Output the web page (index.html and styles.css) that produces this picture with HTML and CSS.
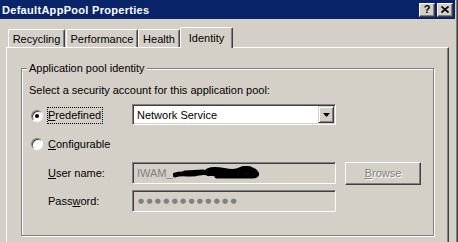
FILE: index.html
```html
<!DOCTYPE html>
<html lang="en">
<head>
    <meta charset="UTF-8">
    <meta name="viewport" content="width=device-width, initial-scale=1.0">
    <title>DefaultAppPool Properties</title>
    <link rel="stylesheet" href="styles.css">
</head>
<body>
    <div class="window">
        <div class="titlebar">
            <span class="title">DefaultAppPool Properties</span>
            <div class="caption-buttons">
                <span class="cap-btn cap-help">?</span>
                <span class="cap-btn">
                    <svg width="8" height="7" viewBox="0 0 8 7"><path d="M0.5 0.5 L7.5 6.5 M7.5 0.5 L0.5 6.5" stroke="#000" stroke-width="1.6"/></svg>
                </span>
            </div>
        </div>

        <div class="content">
            <div class="tabs">
                <div class="tab tab-recycling">Recycling</div>
                <div class="tab tab-performance">Performance</div>
                <div class="tab tab-health">Health</div>
                <div class="tab tab-identity active">Identity</div>
            </div>

            <div class="panel">
                <fieldset class="group">
                    <legend>Application pool identity</legend>
                    <p class="hint">Select a security account for this application pool:</p>

                    <div class="row row-predefined">
                        <span class="radio-cell"><span class="radio checked"></span></span>
                        <span class="label-cell"><span class="focus"><u>P</u>redefined</span></span>
                        <div class="combo">
                            <span class="combo-text">Network Service</span>
                            <span class="drop-btn">
                                <svg width="7" height="4" viewBox="0 0 7 4"><polygon points="0,0 7,0 3.5,4" fill="#000"/></svg>
                            </span>
                        </div>
                    </div>

                    <div class="row row-configurable">
                        <span class="radio-cell"><span class="radio"></span></span>
                        <span class="label-cell"><u>C</u>onfigurable</span>
                    </div>

                    <div class="row row-user">
                        <span class="radio-cell"></span>
                        <span class="label-cell"><u>U</u>ser name:</span>
                        <div class="field">
                            IWAM_<svg class="scribble" width="86" height="15" viewBox="0 0 86 15">
                                <path d="M2 9 C10 6 18 10 26 7 C34 5 40 9 46 8" stroke="#000" stroke-width="5" fill="none" stroke-linecap="round"/>
                                <path d="M36 6 C46 2 58 11 68 5 C74 2 80 5 82 8" stroke="#000" stroke-width="8" fill="none" stroke-linecap="round"/>
                                <path d="M44 10 L80 10 M12 7 L30 6" stroke="#000" stroke-width="5" stroke-linecap="round"/>
                            </svg>
                        </div>
                        <span class="browse"><u>B</u>rowse</span>
                    </div>

                    <div class="row row-password">
                        <span class="radio-cell"></span>
                        <span class="label-cell">Pass<u>w</u>ord:</span>
                        <div class="field"><span class="dots">●●●●●●●●●●●●</span></div>
                    </div>
                </fieldset>
            </div>
        </div>
    </div>
</body>
</html>
```

FILE: styles.css
```css
html {
    background: #404040;
}
body {
    margin: 0;
    width: 457px;
    height: 242px;
    overflow: hidden;
    background: #d4d0c8;
    font-family: "Liberation Sans", Arial, sans-serif;
    font-size: 11px;
    color: #000;
}
.window {
    width: 455px;
    height: 242px;
    padding-right: 1px;
    border-right: 1px solid #808080;
}
.titlebar {
    height: 19px;
    background: #0a246a;
    display: flex;
    align-items: center;
    justify-content: space-between;
    padding: 0 2px;
}
.title {
    color: #fff;
    font-weight: bold;
    letter-spacing: 0.3px;
}
.caption-buttons {
    display: flex;
    gap: 2px;
}
.cap-btn {
    width: 16px;
    height: 14px;
    box-sizing: border-box;
    background: #d4d0c8;
    border: 1px solid;
    border-color: #fff #404040 #404040 #fff;
    box-shadow: inset -1px -1px #808080;
    display: flex;
    align-items: center;
    justify-content: center;
}
.cap-help {
    font-weight: bold;
    font-size: 11px;
    line-height: 1;
}
.content {
    padding: 8px 0 0 6px;
}
.tabs {
    display: flex;
    align-items: flex-end;
    height: 20px;
    padding-left: 2px;
}
.tab {
    height: 18px;
    box-sizing: border-box;
    border-top: 1px solid #fff;
    border-left: 1px solid #fff;
    border-right: 1px solid #404040;
    border-top-left-radius: 2px;
    border-top-right-radius: 2px;
    box-shadow: inset -1px 0 #808080;
    display: flex;
    align-items: center;
    justify-content: center;
}
.tab-recycling {
    width: 57px;
    margin-right: 1px;
}
.tab-performance {
    width: 72px;
}
.tab-health {
    width: 42px;
}
.tab-identity {
    width: 53px;
}
.tab.active {
    height: 21px;
    margin-bottom: -1px;
    padding-bottom: 1px;
    background: #d4d0c8;
    position: relative;
    z-index: 1;
}
.panel {
    width: 443px;
    height: 195px;
    box-sizing: border-box;
    border-top: 1px solid #fff;
    border-left: 1px solid #fff;
    border-right: 1px solid #404040;
    box-shadow: inset -1px 0 #808080;
    padding: 13px 0 0 14px;
}
.group {
    width: 413px;
    box-sizing: border-box;
    margin: 0;
    padding: 8px 7px 23px 7px;
    border: 1px solid #808080;
    box-shadow: 1px 1px 0 #fff, inset 1px 1px 0 #fff;
}
.group legend {
    padding: 0 2px;
    margin-left: -2px;
    line-height: 14px;
    background: #d4d0c8;
}
.hint {
    margin: 0;
    line-height: 14px;
}
.row {
    display: flex;
    align-items: center;
}
.row-predefined {
    margin-top: 7px;
    height: 21px;
}
.row-configurable {
    margin-top: 9px;
    height: 20px;
}
.row-user {
    margin-top: 8px;
    height: 22px;
}
.row-password {
    margin-top: 6px;
    height: 22px;
}
.radio-cell {
    width: 19px;
    flex-shrink: 0;
}
.row-predefined .radio-cell,
.row-predefined .label-cell {
    padding-top: 2px;
}
.label-cell {
    width: 84px;
    flex-shrink: 0;
}
.radio {
    margin-left: 2px;
    width: 12px;
    height: 12px;
    box-sizing: border-box;
    border-radius: 50%;
    border: 1px solid;
    border-color: #808080 #fff #fff #808080;
    box-shadow: inset 1px 1px #404040;
    background: #fff;
    display: flex;
    align-items: center;
    justify-content: center;
}
.radio.checked::after {
    content: "";
    width: 4px;
    height: 4px;
    border-radius: 50%;
    background: #000;
}
.focus {
    display: inline-block;
    margin-left: -1px;
    padding: 0 1px 0 0;
    line-height: 15px;
    border: 1px dotted #000;
}
.combo {
    width: 204px;
    height: 21px;
    box-sizing: border-box;
    border: 1px solid;
    border-color: #808080 #fff #fff #808080;
    box-shadow: inset 1px 1px #404040, inset -1px -1px #d4d0c8;
    background: #fff;
    padding: 1px;
    display: flex;
    align-items: center;
}
.combo-text {
    flex: 1;
    padding-left: 3px;
}
.drop-btn {
    width: 16px;
    height: 17px;
    box-sizing: border-box;
    background: #d4d0c8;
    border: 1px solid;
    border-color: #d4d0c8 #404040 #404040 #d4d0c8;
    box-shadow: inset 1px 1px #fff, inset -1px -1px #808080;
    display: flex;
    align-items: center;
    justify-content: center;
}
.field {
    width: 204px;
    height: 22px;
    box-sizing: border-box;
    border: 1px solid;
    border-color: #808080 #fff #fff #808080;
    box-shadow: inset 1px 1px #404040, inset -1px -1px #d4d0c8;
    background: #d4d0c8;
    color: #808080;
    padding-left: 4px;
    display: flex;
    align-items: center;
}
.dots {
    font-family: "DejaVu Sans", sans-serif;
    font-size: 7px;
    letter-spacing: 2.3px;
    padding-left: 1px;
}
.browse {
    margin-left: 9px;
    width: 76px;
    height: 23px;
    box-sizing: border-box;
    border: 1px solid;
    border-color: #fff #404040 #404040 #fff;
    box-shadow: inset -1px -1px #808080;
    color: #808080;
    text-shadow: 1px 1px 0 #fff;
    display: flex;
    align-items: center;
    justify-content: center;
}
```
